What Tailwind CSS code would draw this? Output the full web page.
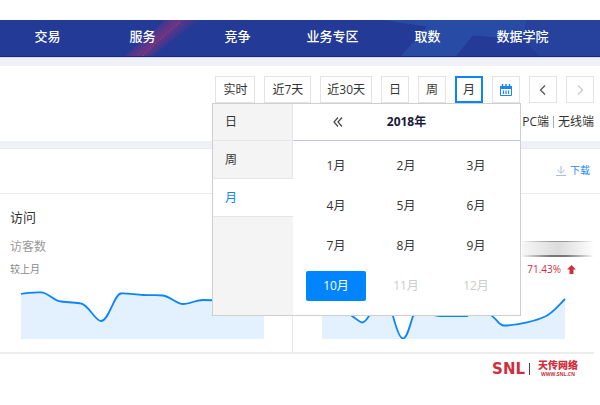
<!DOCTYPE html>
<html lang="zh-CN">
<head>
    <meta charset="UTF-8">
    <meta name="viewport" content="width=device-width, initial-scale=1.0">
    <title>访问数据</title>
    <script src="https://cdn.jsdelivr.net/npm/@tailwindcss/browser@4"></script>
</head>
<body class="bg-white pt-5 font-['Open_Sans','Noto_Sans_CJK_SC',sans-serif] text-xs text-[#333]">

    <!-- Top nav -->
    <header class="relative overflow-hidden bg-[#233a96] border-b border-[#14258a]">
        <svg class="absolute inset-0 w-full h-full" viewBox="0 0 600 37" preserveAspectRatio="none" aria-hidden="true">
            <defs>
                <linearGradient id="glow" x1="148" y1="8" x2="168" y2="30" gradientUnits="userSpaceOnUse">
                    <stop offset="0" stop-color="#7a3480" stop-opacity="0"/>
                    <stop offset="0.5" stop-color="#7a3480" stop-opacity="0.8"/>
                    <stop offset="1" stop-color="#7a3480" stop-opacity="0"/>
                </linearGradient>
            </defs>
            <path d="M383 0H527L522 20L473 16L456 37H401L427 7Z" fill="#284ba6"/>
            <path d="M522 20L527 0H600V37H540Z" fill="#27429c"/>
            <path d="M125 37L165 0H200L152 37Z" fill="url(#glow)"/>
            <path d="M143 37L148 31L181 1" fill="none" stroke="#e0353f" stroke-width="1" stroke-dasharray="1.5 2"/>
        </svg>
        <nav class="relative grid grid-cols-6 pr-[30px] pt-1.5 pb-2.5 text-center text-[13px] leading-5 font-medium text-white">
            <a href="#">交易</a>
            <a href="#">服务</a>
            <a href="#">竞争</a>
            <a href="#">业务专区</a>
            <a href="#">取数</a>
            <a href="#">数据学院</a>
        </nav>
    </header>
    <div class="h-[9px] border-t border-[#dcd8e2] bg-[#f0f1f7]"></div>

    <!-- Date filter -->
    <section class="pt-2.5">
        <div class="flex justify-end gap-[9px] pr-1.5">
            <button class="h-[27px] border border-[#e3e3e3] px-[7px]">实时</button>
            <button class="h-[27px] border border-[#e3e3e3] px-[7px]">近7天</button>
            <button class="h-[27px] border border-[#e3e3e3] px-1.5">近30天</button>
            <button class="h-[27px] w-7 border border-[#e3e3e3]">日</button>
            <button class="h-[27px] w-7 border border-[#e3e3e3]">周</button>
            <button class="h-[27px] w-7 border-2 border-[#0a84ff]">月</button>
            <div class="relative">
                <button class="flex h-[27px] w-7 items-center justify-center border border-[#e3e3e3]" aria-label="选择日期">
                    <svg class="h-3 w-3" viewBox="0 0 12 12" fill="none" stroke="#1b87f7">
                        <path d="M0.5 2.5H11.5V11.5H0.5Z"/>
                        <path d="M0 2H12V5H0Z" fill="#1b87f7" stroke="none"/>
                        <path d="M2.5 0V3M6 0V3M9.5 0V3" stroke-width="1.5"/>
                        <path d="M3.5 6.5V10M6 6.5V10M8.5 6.5V10" stroke-width="1.2"/>
                    </svg>
                </button>

                <!-- Month picker -->
                <div class="absolute top-full right-[-1px] z-10 flex h-[213px] w-[309px] border border-[#cfcfcf] bg-white">
                    <div class="flex w-20 flex-col bg-[#f4f4f4]">
                        <button class="h-[37px] border-r border-b border-[#e6e6e6] pl-3 text-left">日</button>
                        <button class="h-[38px] border-r border-b border-[#e6e6e6] pl-3 text-left">周</button>
                        <button class="h-[38px] border-b border-[#e6e6e6] bg-white pl-3 text-left text-[#0a84ff]">月</button>
                    </div>
                    <div class="flex-1">
                        <div class="grid h-[37px] grid-cols-[1fr_2fr_1fr] items-center border-b border-[#bcc9e0]">
                            <button class="flex justify-center pl-[34px]" aria-label="上一年">
                                <svg class="h-2.5 w-2.5" viewBox="0 0 10 10" fill="none" stroke="#444" stroke-width="1.2">
                                    <path d="M5 0.5L1 5L5 9.5M9 0.5L5 5L9 9.5"/>
                                </svg>
                            </button>
                            <div class="text-center font-bold text-[#1a1a3a]">2018年</div>
                        </div>
                        <div class="grid grid-cols-3 gap-2.5 pt-2.5 pr-3.5 pl-[13px]">
                            <button class="h-[30px]">1月</button>
                            <button class="h-[30px]">2月</button>
                            <button class="h-[30px]">3月</button>
                            <button class="h-[30px]">4月</button>
                            <button class="h-[30px]">5月</button>
                            <button class="h-[30px]">6月</button>
                            <button class="h-[30px]">7月</button>
                            <button class="h-[30px]">8月</button>
                            <button class="h-[30px]">9月</button>
                            <button class="h-[30px] rounded-xs bg-[#0084ff] text-white">10月</button>
                            <button class="h-[30px] text-[#ccc]" disabled>11月</button>
                            <button class="h-[30px] text-[#ccc]" disabled>12月</button>
                        </div>
                    </div>
                </div>
            </div>
            <button class="flex h-[27px] w-7 items-center justify-center border border-[#e3e3e3]" aria-label="上一月">
                <svg class="h-2.5 w-2.5" viewBox="0 0 10 10" fill="none" stroke="#555" stroke-width="1.3"><path d="M7 0.5L2.5 5L7 9.5"/></svg>
            </button>
            <button class="flex h-[27px] w-7 items-center justify-center border border-[#e3e3e3]" aria-label="下一月" disabled>
                <svg class="h-2.5 w-2.5" viewBox="0 0 10 10" fill="none" stroke="#ccc" stroke-width="1.3"><path d="M3 0.5L7.5 5L3 9.5"/></svg>
            </button>
        </div>
        <div class="flex h-[38px] items-center justify-end gap-1 pr-1.5">
            <a href="#">PC端</a>
            <span class="h-3 w-px bg-[#aaa]"></span>
            <a href="#">无线端</a>
        </div>
    </section>
    <div class="h-2 border-b border-[#e9e9ee] bg-[#f0f1f7]"></div>

    <div class="flex h-[45px] items-center justify-end border-b border-[#ebebeb] pr-2.5">
        <a href="#" class="flex items-center gap-1 text-[10px] text-[#1b87f7]">
            <svg class="h-2.5 w-2.5" viewBox="0 0 10 10" fill="none" stroke="#a9b9d6"><path d="M5 0V7M1.5 4L5 7.3L8.5 4M0 9.5H10"/></svg>
            下载
        </a>
    </div>

    <!-- Metric cards -->
    <main class="mr-1.5 grid grid-cols-[293fr_301fr] border-b-2 border-[#ededed]">
        <section class="border-r border-[#e8e8e8] pt-[13px] pb-[13px]">
            <h2 class="pl-2.5 text-[13px] leading-5">访问</h2>
            <p class="pt-2.5 pl-2.5 leading-5 text-[#999]">访客数</p>
            <p class="pt-1 pl-2.5 text-[10px] leading-4 text-[#888]">较上月</p>
            <svg class="mt-2.5 h-[52px] w-full" viewBox="0 0 292 52" preserveAspectRatio="none">
                <path d="M21 7C28 5 35 5.300 41 5.300C48 5.300 54 14 61 14.500C70 16 76 15 81 16.500C89 18 95 34 101 34C109 34 114 7 121 6.500C128 6 136 8 143 8C150 8.500 158 7.500 163 8.500C171 10 177 17 183 17C190 17 196 13 203 13C215 13 230 15 264 17V52H21Z" fill="#e3f1ff"/>
                <path d="M21 7C28 5 35 5.300 41 5.300C48 5.300 54 14 61 14.500C70 16 76 15 81 16.500C89 18 95 34 101 34C109 34 114 7 121 6.500C128 6 136 8 143 8C150 8.500 158 7.500 163 8.500C171 10 177 17 183 17C190 17 196 13 203 13C215 13 230 15 264 17" fill="none" stroke="#0a84ff" stroke-width="1.800"/>
            </svg>
        </section>
        <section class="flex flex-col pt-[47px] pb-[13px]">
            <div class="h-4 w-[72px] self-end bg-linear-to-r from-[#f6f6f6] via-[#dcdcdc] to-white">
                <div class="h-full border-t border-b-2 border-t-[#999] border-b-[#777] mask-x-from-60% mask-x-to-100%"></div>
            </div>
            <div class="mt-1 flex items-center justify-end gap-1.5 pr-[18px] text-[10px] leading-4 text-[#cf2f3c]">
                71.43%
                <svg class="h-[9px] w-[9px]" viewBox="0 0 10 10" fill="#cf2f3c"><path d="M5 0L10 5H7.200V10H2.800V5H0Z"/></svg>
            </div>
            <svg class="mt-2.5 h-[52px] w-full" viewBox="293 0 301 52" preserveAspectRatio="none">
                <path d="M322 14C338 14 346 20 352 29C358 33 360 35.500 362 35.500C365 35.500 367 32 369 29C376 12 388 12 393 29C397 44 400 51.500 403 51.500C407 51.500 410 38 413 29C420 22 430 29 442 29H467C476 20 485 20 492 29C497 32 499 38.500 504 38.500C518 38.500 538 33 544 30C552 27 558 19 565 12V52H322Z" fill="#e3f1ff"/>
                <path d="M322 14C338 14 346 20 352 29C358 33 360 35.500 362 35.500C365 35.500 367 32 369 29C376 12 388 12 393 29C397 44 400 51.500 403 51.500C407 51.500 410 38 413 29C420 22 430 29 442 29H467C476 20 485 20 492 29C497 32 499 38.500 504 38.500C518 38.500 538 33 544 30C552 27 558 19 565 12" fill="none" stroke="#0a84ff" stroke-width="1.800"/>
            </svg>
        </section>
    </main>

    <footer class="flex items-center justify-end gap-1 pt-[5px] pr-[22px] text-[#cf2f3c]">
        <span class="font-['DejaVu_Sans',sans-serif] text-[15px] leading-4 font-bold">SNL</span>
        <span class="h-3 w-px bg-[#444]"></span>
        <div class="pl-1 text-center">
            <div class="text-[10px] leading-3 font-black">天传网络</div>
            <div class="text-[5px] leading-[7px] font-bold">WWW.SNL.CN</div>
        </div>
    </footer>
</body>
</html>
